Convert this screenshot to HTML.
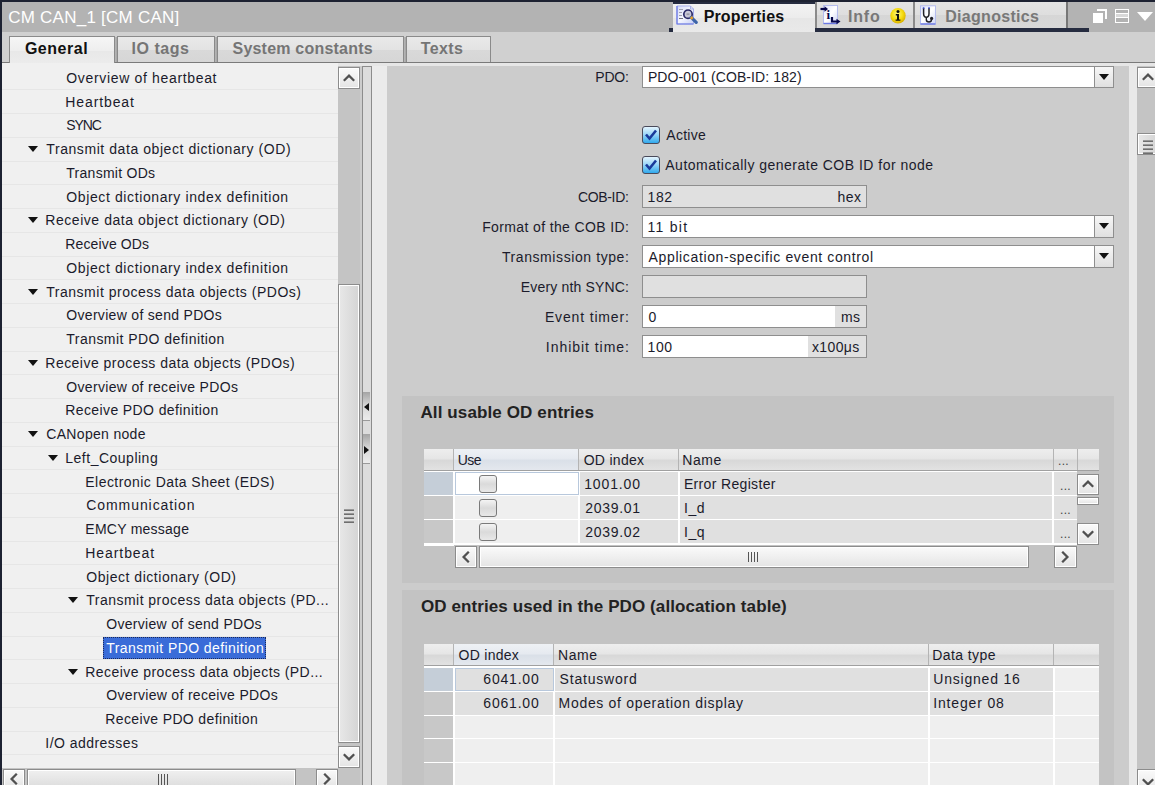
<!DOCTYPE html>
<html><head><meta charset="utf-8">
<style>
*{margin:0;padding:0;box-sizing:border-box}
html,body{width:1155px;height:785px;overflow:hidden;background:#cccccc;font-family:"Liberation Sans",sans-serif;}
.a{position:absolute}
.t{position:absolute;white-space:pre}
#titlebar{position:absolute;left:0;top:0;width:1155px;height:32px;background:#b3b3b3;border-top:2px solid #1d2232;border-left:2px solid #1d2232}
#leftborder{position:absolute;left:0;top:0;width:2px;height:785px;background:#1d2232}
#tabstrip{position:absolute;left:2px;top:32px;width:1153px;height:31px;background:#d0d0d0}
.tab{position:absolute;top:36px;height:27px;border:1px solid #8a8a8a;border-bottom:none;background:linear-gradient(#e9e9e9,#e3e3e3 50%,#d9d9d9 51%,#d6d6d6)}
.rtab{position:absolute;top:2px;height:26px;border-left:2px solid #8a8a8a;background:linear-gradient(#e4e4e4,#dedede 50%,#d6d6d6 51%,#d8d8d8)}
#tree{position:absolute;left:2px;top:63px;width:336px;height:705px;background:#f0f0f0}
.sep{position:absolute;left:2px;width:336px;height:1px;background:#e6e6e6}
.sbtn{position:absolute;border:1px solid #8c8c8c;background:linear-gradient(#fafafa,#e4e4e4);box-shadow:inset 0 0 0 1px #fff}
.grip{position:absolute;width:10px;height:14px;background:linear-gradient(#bbb 0,#777 1px,#666 2px,transparent 2px,transparent 4px,#bbb 4px,#777 5px,#666 6px,transparent 6px,transparent 8px,#bbb 8px,#777 9px,#666 10px,transparent 10px,transparent 12px,#bbb 12px,#777 13px,#666 14px)}
.inp{position:absolute;border:1px solid #8e8e8e}
.ddb{position:absolute;border:1px solid #8e8e8e;background:linear-gradient(#f6f6f6,#e0e0e0)}
.cbx{position:absolute;width:18px;height:18px;border:1px solid #7a7a7a;border-radius:3px;background:linear-gradient(#f4f4f4,#dadada 50%,#e8e8e8)}
.th{position:absolute;background:linear-gradient(#eeeeee,#e6e6e6 45%,#d8d8d8 55%,#e2e2e2);border-bottom:1px solid #a0a0a0}
</style></head><body>

<div id="titlebar"></div>
<div class="a" style="left:669px;top:28px;width:420px;height:4px;background:#262c40"></div>
<div class="a" style="left:673px;top:2px;width:142px;height:30px;background:linear-gradient(#f2f2f2,#ececec 50%,#e6e6e6 51%,#e9e9e9);border-top:2px solid #262c40"></div>
<div class="rtab" style="left:815px;width:98px"></div>
<div class="rtab" style="left:913px;width:155px;border-right:2px solid #777"></div>
<svg class="a" style="left:676px;top:5px" width="22" height="22" viewBox="0 0 22 22">
 <defs><linearGradient id="pdoc" x1="0" y1="0" x2="1" y2="1"><stop offset="0" stop-color="#d6dcf8"/><stop offset="0.5" stop-color="#f4f6ff"/><stop offset="1" stop-color="#c8d0f4"/></linearGradient></defs>
 <path d="M1,1 L14.5,1 L17.5,4 L17.5,19 L1,19 Z" fill="url(#pdoc)" stroke="#a8b0ec" stroke-width="1"/>
 <path d="M1,1 L1,19 L17.5,19" fill="none" stroke="#6a78e4" stroke-width="1.2"/>
 <path d="M14.5,1 L14.5,4 L17.5,4" fill="none" stroke="#9aa4e0" stroke-width="0.8"/>
 <line x1="3" y1="4.5" x2="7" y2="4.5" stroke="#a0a0b0"/><line x1="3" y1="7.5" x2="6" y2="7.5" stroke="#a0a0b0"/><line x1="3" y1="10.5" x2="6" y2="10.5" stroke="#a0a0b0"/><line x1="3" y1="13.5" x2="7" y2="13.5" stroke="#707080"/>
 <circle cx="12" cy="9.2" r="4.2" fill="#c8c8d8" stroke="#2a2a68" stroke-width="1.7"/>
 <rect x="10.5" y="8.3" width="3" height="1.8" fill="#9a9aaa"/>
 <line x1="15.2" y1="12.4" x2="20.2" y2="17.4" stroke="#3c64a8" stroke-width="3.2" stroke-linecap="round"/>
 <line x1="14.8" y1="12" x2="16.6" y2="13.8" stroke="#e8a028" stroke-width="2.6"/>
</svg>
<svg class="a" style="left:820px;top:4px" width="22" height="22" viewBox="0 0 22 22">
 <defs><linearGradient id="idoc" x1="0" y1="0" x2="1" y2="1"><stop offset="0" stop-color="#dfe3fb"/><stop offset="0.5" stop-color="#ffffff"/><stop offset="1" stop-color="#cdd4f6"/></linearGradient></defs>
 <rect x="3.5" y="1.5" width="14" height="18" fill="url(#idoc)" stroke="#b4bcee" stroke-width="1"/>
 <line x1="3.5" y1="19.5" x2="17.5" y2="19.5" stroke="#6a78e4" stroke-width="1.4"/>
 <path d="M0.5,5 L6,5" stroke="#06064a" stroke-width="2.2"/><path d="M4.5,2.2 L8,5 L4.5,7.8 Z" fill="#06064a"/>
 <text x="6.4" y="15" font-family="Liberation Serif" font-weight="bold" font-size="13" fill="#06064a">i</text>
 <path d="M12,13 L12,17.5 L17.5,17.5" fill="none" stroke="#06064a" stroke-width="2.2"/><path d="M16.5,14.7 L20.5,17.5 L16.5,20.3 Z" fill="#06064a"/>
</svg>
<svg class="a" style="left:889px;top:7px" width="18" height="18" viewBox="0 0 18 18">
 <defs><radialGradient id="yel" cx="0.45" cy="0.4" r="0.6"><stop offset="0" stop-color="#fff680"/><stop offset="0.6" stop-color="#f6dc10"/><stop offset="1" stop-color="#d8b000"/></radialGradient></defs>
 <circle cx="9" cy="8.8" r="7.7" fill="url(#yel)"/>
 <circle cx="9" cy="4.6" r="1.5" fill="#111"/>
 <path d="M6.8,7 L10,7 L10,12.4 L11.4,12.4 L11.4,13.8 L6.6,13.8 L6.6,12.4 L8,12.4 L8,8.4 L6.8,8.4 Z" fill="#111"/>
</svg>
<svg class="a" style="left:919px;top:5px" width="18" height="21" viewBox="0 0 18 21">
 <defs><linearGradient id="ddoc" x1="0" y1="0" x2="1" y2="1"><stop offset="0" stop-color="#dfe3fb"/><stop offset="0.5" stop-color="#ffffff"/><stop offset="1" stop-color="#cdd4f6"/></linearGradient></defs>
 <rect x="1.5" y="0.8" width="15" height="18.2" fill="url(#ddoc)" stroke="#b4bcee" stroke-width="1"/>
 <line x1="1.5" y1="19" x2="16.5" y2="19" stroke="#6a78e4" stroke-width="1.4"/>
 <path d="M4.6,3 L4.6,8.5 Q4.6,12.2 7.3,12.2 Q10,12.2 10,8.5 L10,3" fill="none" stroke="#202028" stroke-width="1.5"/>
 <path d="M7.3,12.2 L7.3,14.5 Q7.3,17 10,17 Q12.5,17 12.5,14.5" fill="none" stroke="#202028" stroke-width="1.4"/>
 <circle cx="12.6" cy="13.4" r="1.6" fill="#202028"/>
 <line x1="3.8" y1="3" x2="5.4" y2="3" stroke="#3a4ad0" stroke-width="1.5"/><line x1="9.2" y1="3" x2="10.8" y2="3" stroke="#3a4ad0" stroke-width="1.5"/>
</svg>
<div class="a" style="left:1097px;top:9px;width:10px;height:10px;border-top:2px solid #fff;border-right:2px solid #fff"></div>
<div class="a" style="left:1093px;top:13px;width:10px;height:10px;background:#fff"></div>
<div class="a" style="left:1115px;top:9px;width:14px;height:14px;border:1.5px solid #fff;background:linear-gradient(#b3b3b3 0,#b3b3b3 3px,#fff 3px,#fff 4px,#d8d8d8 4px,#d8d8d8 7px,#fff 7px,#fff 8px,#b3b3b3 8px)"></div>
<svg class="a" style="left:1137px;top:12px" width="16" height="10" viewBox="0 0 16 10"><path d="M0,0 L16,0 L8,9 Z" fill="#fff"/></svg>

<div id="leftborder"></div>
<div id="tabstrip"></div>
<div class="a" style="left:2px;top:62px;width:1153px;height:1px;background:#7a7a7a"></div>
<div class="a" style="left:2px;top:63px;width:1153px;height:3px;background:#e6e6e6"></div>
<div class="tab" style="left:9px;width:106px;height:28px;background:linear-gradient(#f6f6f6,#eeeeee 50%,#e8e8e8 51%,#ececec)"></div>
<div class="tab" style="left:117px;width:98px;height:26px"></div>
<div class="tab" style="left:217px;width:187px;height:26px"></div>
<div class="tab" style="left:406px;width:85px;height:26px"></div>
<div class="a" style="left:115px;top:37px;width:2px;height:25px;background:linear-gradient(90deg,#b8b8b8,#a4a4a4)"></div>
<div class="a" style="left:215px;top:37px;width:2px;height:25px;background:linear-gradient(90deg,#b8b8b8,#a4a4a4)"></div>
<div class="a" style="left:404px;top:37px;width:2px;height:25px;background:linear-gradient(90deg,#b8b8b8,#a4a4a4)"></div>

<div id="tree"></div>
<div class="sep" style="top:89.25px"></div>
<div class="sep" style="top:113.00px"></div>
<div class="sep" style="top:136.75px"></div>
<div class="sep" style="top:160.50px"></div>
<svg class="a" style="left:28px;top:146px" width="10" height="6"><path d="M0,0 L10,0 L5,6Z" fill="#111"/></svg>
<div class="sep" style="top:184.25px"></div>
<div class="sep" style="top:208.00px"></div>
<div class="sep" style="top:231.75px"></div>
<svg class="a" style="left:28px;top:217px" width="10" height="6"><path d="M0,0 L10,0 L5,6Z" fill="#111"/></svg>
<div class="sep" style="top:255.50px"></div>
<div class="sep" style="top:279.25px"></div>
<div class="sep" style="top:303.00px"></div>
<svg class="a" style="left:28px;top:289px" width="10" height="6"><path d="M0,0 L10,0 L5,6Z" fill="#111"/></svg>
<div class="sep" style="top:326.75px"></div>
<div class="sep" style="top:350.50px"></div>
<div class="sep" style="top:374.25px"></div>
<svg class="a" style="left:28px;top:360px" width="10" height="6"><path d="M0,0 L10,0 L5,6Z" fill="#111"/></svg>
<div class="sep" style="top:398.00px"></div>
<div class="sep" style="top:421.75px"></div>
<div class="sep" style="top:445.50px"></div>
<svg class="a" style="left:28px;top:431px" width="10" height="6"><path d="M0,0 L10,0 L5,6Z" fill="#111"/></svg>
<div class="sep" style="top:469.25px"></div>
<svg class="a" style="left:48px;top:455px" width="10" height="6"><path d="M0,0 L10,0 L5,6Z" fill="#111"/></svg>
<div class="sep" style="top:493.00px"></div>
<div class="sep" style="top:516.75px"></div>
<div class="sep" style="top:540.50px"></div>
<div class="sep" style="top:564.25px"></div>
<div class="sep" style="top:588.00px"></div>
<div class="sep" style="top:611.75px"></div>
<svg class="a" style="left:68px;top:597px" width="10" height="6"><path d="M0,0 L10,0 L5,6Z" fill="#111"/></svg>
<div class="sep" style="top:635.50px"></div>
<div class="sep" style="top:659.25px"></div>
<div class="a" style="left:103px;top:636.5px;width:162.5px;height:22px;background:#3a6cd8;border:1px dotted #1c2a5a"></div>
<div class="sep" style="top:683.00px"></div>
<svg class="a" style="left:68px;top:669px" width="10" height="6"><path d="M0,0 L10,0 L5,6Z" fill="#111"/></svg>
<div class="sep" style="top:706.75px"></div>
<div class="sep" style="top:730.50px"></div>
<div class="sep" style="top:754.25px"></div>
<div class="sep" style="top:778.00px"></div>
<div class="a" style="left:338px;top:66px;width:22px;height:702px;background:#c4c4c4"></div>
<div class="sbtn" style="left:338px;top:67px;width:22px;height:22px"></div><svg class="a" style="left:343px;top:72px" width="12" height="12" viewBox="0 0 12 12"><path d="M0.8,8.8 L6,3.6 L11.2,8.8" fill="none" stroke="#505050" stroke-width="2.3"/></svg>
<div class="sbtn" style="left:338px;top:284px;width:22px;height:459px;background:linear-gradient(90deg,#e8e8e8,#d4d4d4)"></div>
<div class="grip" style="left:344px;top:509px"></div>
<div class="sbtn" style="left:338px;top:746px;width:22px;height:22px"></div><svg class="a" style="left:343px;top:751px" width="12" height="12" viewBox="0 0 12 12"><path d="M0.8,3.2 L6,8.4 L11.2,3.2" fill="none" stroke="#505050" stroke-width="2.3"/></svg>
<div class="a" style="left:2px;top:768px;width:358px;height:17px;background:#c4c4c4"></div>
<div class="sbtn" style="left:3px;top:769px;width:22px;height:20px"></div><svg class="a" style="left:8px;top:773px" width="12" height="12" viewBox="0 0 12 12"><path d="M8.8,0.8 L3.6,6 L8.8,11.2" fill="none" stroke="#505050" stroke-width="2.3"/></svg>
<div class="sbtn" style="left:27px;top:769px;width:269px;height:20px;background:linear-gradient(#f0f0f0,#dcdcdc)"></div>
<div class="a" style="left:158px;top:774px;width:10px;height:11px;background:linear-gradient(90deg,#555 0,#555 1.2px,transparent 1.2px,transparent 3px,#555 3px,#555 4.2px,transparent 4.2px,transparent 6px,#555 6px,#555 7.2px,transparent 7.2px,transparent 9px,#555 9px)"></div>
<div class="sbtn" style="left:316px;top:769px;width:22px;height:20px"></div><svg class="a" style="left:321px;top:773px" width="12" height="12" viewBox="0 0 12 12"><path d="M3.2,0.8 L8.4,6 L3.2,11.2" fill="none" stroke="#505050" stroke-width="2.3"/></svg>
<div class="a" style="left:362px;top:66px;width:10px;height:719px;background:#dcdcdc;border:1px solid #8c8c8c;border-bottom:none"></div>
<div class="a" style="left:363px;top:392px;width:7px;height:29px;background:linear-gradient(#a4a4a4,#d8d8d8 50%,#ececec);border-bottom:1px solid #9a9a9a"></div>
<svg class="a" style="left:364px;top:403px" width="5" height="8"><path d="M5,0 L5,8 L0,4Z" fill="#111"/></svg>
<div class="a" style="left:363px;top:434px;width:7px;height:30px;background:linear-gradient(#a4a4a4,#d8d8d8 50%,#ececec);border-bottom:1px solid #9a9a9a"></div>
<svg class="a" style="left:364px;top:446px" width="5" height="8"><path d="M0,0 L0,8 L5,4Z" fill="#111"/></svg>
<div class="a" style="left:372px;top:66px;width:15px;height:719px;background:#ebebeb"></div>
<div class="a" style="left:387px;top:66px;width:742px;height:719px;background:#cccccc"></div>
<div class="a" style="left:1129px;top:66px;width:8px;height:719px;background:#e9e9e9"></div>
<div class="a" style="left:1137px;top:66px;width:18px;height:719px;background:#c4c4c4"></div>
<div class="sbtn" style="left:1137px;top:67px;width:22px;height:21px"></div><svg class="a" style="left:1142px;top:71px" width="12" height="12" viewBox="0 0 12 12"><path d="M0.8,8.8 L6,3.6 L11.2,8.8" fill="none" stroke="#505050" stroke-width="2.3"/></svg>
<div class="sbtn" style="left:1137px;top:133px;width:22px;height:22px;background:linear-gradient(90deg,#e8e8e8,#d4d4d4)"></div>
<div class="grip" style="left:1143px;top:140px"></div>
<div class="sbtn" style="left:1137px;top:769px;width:22px;height:26px"></div><svg class="a" style="left:1142px;top:776px" width="12" height="12" viewBox="0 0 12 12"><path d="M0.8,3.2 L6,8.4 L11.2,3.2" fill="none" stroke="#505050" stroke-width="2.3"/></svg>
<div class="inp" style="left:642px;top:66px;width:472px;height:22px;background:#fff"></div>
<div class="ddb" style="left:1094px;top:66px;width:20px;height:22px"></div>
<svg class="a" style="left:1099px;top:74px" width="10" height="6"><path d="M0,0 L10,0 L5,6Z" fill="#111"/></svg>
<svg class="a" style="left:642px;top:126px" width="18" height="18" viewBox="0 0 18 18">
<defs><linearGradient id="cbg126" x1="0" y1="0" x2="0" y2="1"><stop offset="0" stop-color="#e8f6ff"/><stop offset="0.45" stop-color="#9fd8f8"/><stop offset="1" stop-color="#2aa6ec"/></linearGradient></defs>
<rect x="0.5" y="0.5" width="17" height="17" rx="2.5" fill="url(#cbg126)" stroke="#4a4a5a"/>
<path d="M4,8.5 L7.5,12.5 L14,4.5" fill="none" stroke="#1a3a9a" stroke-width="2.6"/></svg>
<svg class="a" style="left:642px;top:156px" width="18" height="18" viewBox="0 0 18 18">
<defs><linearGradient id="cbg156" x1="0" y1="0" x2="0" y2="1"><stop offset="0" stop-color="#e8f6ff"/><stop offset="0.45" stop-color="#9fd8f8"/><stop offset="1" stop-color="#2aa6ec"/></linearGradient></defs>
<rect x="0.5" y="0.5" width="17" height="17" rx="2.5" fill="url(#cbg156)" stroke="#4a4a5a"/>
<path d="M4,8.5 L7.5,12.5 L14,4.5" fill="none" stroke="#1a3a9a" stroke-width="2.6"/></svg>
<div class="inp" style="left:642px;top:185px;width:225px;height:23px;background:#e0e0e0"></div>
<div class="a" style="left:830px;top:186px;width:36px;height:21px;background:#e0e0e0"></div>
<div class="inp" style="left:642px;top:215px;width:472px;height:23px;background:#fff"></div>
<div class="ddb" style="left:1094px;top:215px;width:20px;height:23px"></div>
<svg class="a" style="left:1099px;top:223px" width="10" height="6"><path d="M0,0 L10,0 L5,6Z" fill="#111"/></svg>
<div class="inp" style="left:642px;top:245px;width:472px;height:23px;background:#fff"></div>
<div class="ddb" style="left:1094px;top:245px;width:20px;height:23px"></div>
<svg class="a" style="left:1099px;top:253px" width="10" height="6"><path d="M0,0 L10,0 L5,6Z" fill="#111"/></svg>
<div class="inp" style="left:642px;top:275px;width:225px;height:23px;background:#e0e0e0"></div>
<div class="inp" style="left:642px;top:305px;width:225px;height:23px;background:#fff"></div>
<div class="a" style="left:835px;top:306px;width:31px;height:21px;background:#e0e0e0"></div>
<div class="inp" style="left:642px;top:335px;width:225px;height:23px;background:#fff"></div>
<div class="a" style="left:808px;top:336px;width:58px;height:21px;background:#e0e0e0"></div>
<div class="a" style="left:402px;top:396px;width:712px;height:187px;background:#c3c3c3"></div>
<div class="a" style="left:402px;top:590px;width:712px;height:195px;background:#c3c3c3"></div>
<div class="th" style="left:424px;top:449px;width:675px;height:22px"></div>
<div class="a" style="left:454px;top:449px;width:125px;height:22px;background:linear-gradient(#eef1f5,#e6eaf0 45%,#dae0e8 55%,#e4e8ee);border-bottom:1px solid #a0a0a0"></div>
<div class="a" style="left:453px;top:449px;width:1px;height:21px;background:#b4b4b4"></div>
<div class="a" style="left:578px;top:449px;width:1px;height:21px;background:#b4b4b4"></div>
<div class="a" style="left:678px;top:449px;width:1px;height:21px;background:#b4b4b4"></div>
<div class="a" style="left:1053px;top:449px;width:1px;height:21px;background:#b4b4b4"></div>
<div class="a" style="left:1077px;top:449px;width:1px;height:21px;background:#b4b4b4"></div>
<div class="a" style="left:424px;top:471.00px;width:675px;height:97.00px;background:#ffffff"></div>
<div class="a" style="left:424px;top:472.00px;width:29px;height:23.00px;background:#c5ced8"></div>
<div class="a" style="left:455px;top:472.00px;width:123px;height:23.00px;background:#ffffff"></div>
<div class="a" style="left:580px;top:472.00px;width:98px;height:23.00px;background:#e0e0e0"></div>
<div class="a" style="left:680px;top:472.00px;width:372px;height:23.00px;background:#e0e0e0"></div>
<div class="a" style="left:1054px;top:472.00px;width:23px;height:23.00px;background:#e0e0e0"></div>
<div class="cbx" style="left:479px;top:475px"></div>
<div class="a" style="left:424px;top:496.00px;width:29px;height:23.00px;background:#c8c8c8"></div>
<div class="a" style="left:455px;top:496.00px;width:123px;height:23.00px;background:#efefef"></div>
<div class="a" style="left:580px;top:496.00px;width:98px;height:23.00px;background:#e0e0e0"></div>
<div class="a" style="left:680px;top:496.00px;width:372px;height:23.00px;background:#e0e0e0"></div>
<div class="a" style="left:1054px;top:496.00px;width:23px;height:23.00px;background:#e0e0e0"></div>
<div class="cbx" style="left:479px;top:499px"></div>
<div class="a" style="left:424px;top:520.00px;width:29px;height:23.00px;background:#c8c8c8"></div>
<div class="a" style="left:455px;top:520.00px;width:123px;height:23.00px;background:#efefef"></div>
<div class="a" style="left:580px;top:520.00px;width:98px;height:23.00px;background:#e0e0e0"></div>
<div class="a" style="left:680px;top:520.00px;width:372px;height:23.00px;background:#e0e0e0"></div>
<div class="a" style="left:1054px;top:520.00px;width:23px;height:23.00px;background:#e0e0e0"></div>
<div class="cbx" style="left:479px;top:523px"></div>
<div class="a" style="left:455px;top:472px;width:124px;height:23px;border:1px solid #b8c8dc"></div>
<div class="a" style="left:1077px;top:471.00px;width:22px;height:97.00px;background:#c3c3c3"></div>
<div class="sbtn" style="left:1077px;top:474px;width:22px;height:21px"></div><svg class="a" style="left:1082px;top:478px" width="12" height="12" viewBox="0 0 12 12"><path d="M0.8,8.8 L6,3.6 L11.2,8.8" fill="none" stroke="#505050" stroke-width="2.3"/></svg>
<div class="sbtn" style="left:1077px;top:497px;width:22px;height:8px"></div>
<div class="sbtn" style="left:1077px;top:523px;width:22px;height:22px"></div><svg class="a" style="left:1082px;top:528px" width="12" height="12" viewBox="0 0 12 12"><path d="M0.8,3.2 L6,8.4 L11.2,3.2" fill="none" stroke="#505050" stroke-width="2.3"/></svg>
<div class="a" style="left:424px;top:544.00px;width:30px;height:24.00px;background:#c3c3c3"></div>
<div class="a" style="left:424px;top:544.00px;width:30px;height:1.50px;background:#ffffff"></div>
<div class="a" style="left:454px;top:545.00px;width:623px;height:23.00px;background:#c3c3c3"></div>
<div class="sbtn" style="left:455px;top:546px;width:22px;height:22px"></div><svg class="a" style="left:460px;top:551px" width="12" height="12" viewBox="0 0 12 12"><path d="M8.8,0.8 L3.6,6 L8.8,11.2" fill="none" stroke="#505050" stroke-width="2.3"/></svg>
<div class="sbtn" style="left:479px;top:546px;width:550px;height:22px"></div>
<div class="a" style="left:748px;top:552px;width:10px;height:10px;background:linear-gradient(90deg,#555 0,#555 1.2px,transparent 1.2px,transparent 3px,#555 3px,#555 4.2px,transparent 4.2px,transparent 6px,#555 6px,#555 7.2px,transparent 7.2px,transparent 9px,#555 9px)"></div>
<div class="sbtn" style="left:1054px;top:546px;width:23px;height:22px"></div><svg class="a" style="left:1059px;top:551px" width="12" height="12" viewBox="0 0 12 12"><path d="M3.2,0.8 L8.4,6 L3.2,11.2" fill="none" stroke="#505050" stroke-width="2.3"/></svg>
<div class="th" style="left:424px;top:644px;width:675px;height:22px"></div>
<div class="a" style="left:454px;top:644px;width:100px;height:22px;background:linear-gradient(#eef1f5,#e6eaf0 45%,#dae0e8 55%,#e4e8ee);border-bottom:1px solid #a0a0a0"></div>
<div class="a" style="left:453px;top:644px;width:1px;height:21px;background:#b4b4b4"></div>
<div class="a" style="left:553px;top:644px;width:1px;height:21px;background:#b4b4b4"></div>
<div class="a" style="left:928px;top:644px;width:1px;height:21px;background:#b4b4b4"></div>
<div class="a" style="left:1053px;top:644px;width:1px;height:21px;background:#b4b4b4"></div>
<div class="a" style="left:424px;top:666.00px;width:675px;height:119.00px;background:#ffffff"></div>
<div class="a" style="left:424px;top:668.00px;width:29px;height:23.00px;background:#c5ced8"></div>
<div class="a" style="left:455px;top:668.00px;width:98px;height:23.00px;background:#e0e0e0"></div>
<div class="a" style="left:555px;top:668.00px;width:373px;height:23.00px;background:#e0e0e0"></div>
<div class="a" style="left:930px;top:668.00px;width:123px;height:23.00px;background:#e0e0e0"></div>
<div class="a" style="left:1055px;top:668.00px;width:44px;height:23.00px;background:#efefef"></div>
<div class="a" style="left:424px;top:692.00px;width:29px;height:23.00px;background:#c8c8c8"></div>
<div class="a" style="left:455px;top:692.00px;width:98px;height:23.00px;background:#e0e0e0"></div>
<div class="a" style="left:555px;top:692.00px;width:373px;height:23.00px;background:#e0e0e0"></div>
<div class="a" style="left:930px;top:692.00px;width:123px;height:23.00px;background:#e0e0e0"></div>
<div class="a" style="left:1055px;top:692.00px;width:44px;height:23.00px;background:#efefef"></div>
<div class="a" style="left:424px;top:716.00px;width:29px;height:22.00px;background:#c8c8c8"></div>
<div class="a" style="left:455px;top:716.00px;width:98px;height:22.00px;background:#efefef"></div>
<div class="a" style="left:555px;top:716.00px;width:373px;height:22.00px;background:#efefef"></div>
<div class="a" style="left:930px;top:716.00px;width:123px;height:22.00px;background:#efefef"></div>
<div class="a" style="left:1055px;top:716.00px;width:44px;height:22.00px;background:#efefef"></div>
<div class="a" style="left:424px;top:739.00px;width:29px;height:23.00px;background:#c8c8c8"></div>
<div class="a" style="left:455px;top:739.00px;width:98px;height:23.00px;background:#efefef"></div>
<div class="a" style="left:555px;top:739.00px;width:373px;height:23.00px;background:#efefef"></div>
<div class="a" style="left:930px;top:739.00px;width:123px;height:23.00px;background:#efefef"></div>
<div class="a" style="left:1055px;top:739.00px;width:44px;height:23.00px;background:#efefef"></div>
<div class="a" style="left:424px;top:763.00px;width:29px;height:23.00px;background:#c8c8c8"></div>
<div class="a" style="left:455px;top:763.00px;width:98px;height:23.00px;background:#efefef"></div>
<div class="a" style="left:555px;top:763.00px;width:373px;height:23.00px;background:#efefef"></div>
<div class="a" style="left:930px;top:763.00px;width:123px;height:23.00px;background:#efefef"></div>
<div class="a" style="left:1055px;top:763.00px;width:44px;height:23.00px;background:#efefef"></div>
<div class="a" style="left:455px;top:668px;width:99px;height:23px;border:1px solid #b8c8dc"></div>

<div class="t" style="left:66.30px;top:71.00px;font-size:14px;line-height:14px;font-weight:normal;color:#1b1b2b;letter-spacing:0.662px;">Overview of heartbeat</div>
<div class="t" style="left:65.30px;top:95.00px;font-size:14px;line-height:14px;font-weight:normal;color:#1b1b2b;letter-spacing:0.888px;">Heartbeat</div>
<div class="t" style="left:66.30px;top:118.00px;font-size:14px;line-height:14px;font-weight:normal;color:#1b1b2b;letter-spacing:-1.095px;">SYNC</div>
<div class="t" style="left:46.30px;top:142.00px;font-size:14px;line-height:14px;font-weight:normal;color:#1b1b2b;letter-spacing:0.569px;">Transmit data object dictionary (OD)</div>
<div class="t" style="left:66.30px;top:166.00px;font-size:14px;line-height:14px;font-weight:normal;color:#1b1b2b;letter-spacing:0.271px;">Transmit ODs</div>
<div class="t" style="left:66.30px;top:190.00px;font-size:14px;line-height:14px;font-weight:normal;color:#1b1b2b;letter-spacing:0.613px;">Object dictionary index definition</div>
<div class="t" style="left:45.30px;top:213.00px;font-size:14px;line-height:14px;font-weight:normal;color:#1b1b2b;letter-spacing:0.546px;">Receive data object dictionary (OD)</div>
<div class="t" style="left:65.30px;top:237.00px;font-size:14px;line-height:14px;font-weight:normal;color:#1b1b2b;letter-spacing:0.133px;">Receive ODs</div>
<div class="t" style="left:66.30px;top:261.00px;font-size:14px;line-height:14px;font-weight:normal;color:#1b1b2b;letter-spacing:0.613px;">Object dictionary index definition</div>
<div class="t" style="left:46.30px;top:285.00px;font-size:14px;line-height:14px;font-weight:normal;color:#1b1b2b;letter-spacing:0.511px;">Transmit process data objects (PDOs)</div>
<div class="t" style="left:66.30px;top:308.00px;font-size:14px;line-height:14px;font-weight:normal;color:#1b1b2b;letter-spacing:0.306px;">Overview of send PDOs</div>
<div class="t" style="left:66.30px;top:332.00px;font-size:14px;line-height:14px;font-weight:normal;color:#1b1b2b;letter-spacing:0.455px;">Transmit PDO definition</div>
<div class="t" style="left:45.30px;top:356.00px;font-size:14px;line-height:14px;font-weight:normal;color:#1b1b2b;letter-spacing:0.469px;">Receive process data objects (PDOs)</div>
<div class="t" style="left:66.30px;top:380.00px;font-size:14px;line-height:14px;font-weight:normal;color:#1b1b2b;letter-spacing:0.324px;">Overview of receive PDOs</div>
<div class="t" style="left:65.30px;top:403.00px;font-size:14px;line-height:14px;font-weight:normal;color:#1b1b2b;letter-spacing:0.388px;">Receive PDO definition</div>
<div class="t" style="left:46.30px;top:427.00px;font-size:14px;line-height:14px;font-weight:normal;color:#1b1b2b;letter-spacing:0.314px;">CANopen node</div>
<div class="t" style="left:65.30px;top:451.00px;font-size:14px;line-height:14px;font-weight:normal;color:#1b1b2b;letter-spacing:0.499px;">Left_Coupling</div>
<div class="t" style="left:85.30px;top:475.00px;font-size:14px;line-height:14px;font-weight:normal;color:#1b1b2b;letter-spacing:0.452px;">Electronic Data Sheet (EDS)</div>
<div class="t" style="left:86.30px;top:498.00px;font-size:14px;line-height:14px;font-weight:normal;color:#1b1b2b;letter-spacing:0.919px;">Communication</div>
<div class="t" style="left:85.30px;top:522.00px;font-size:14px;line-height:14px;font-weight:normal;color:#1b1b2b;letter-spacing:0.249px;">EMCY message</div>
<div class="t" style="left:85.30px;top:546.00px;font-size:14px;line-height:14px;font-weight:normal;color:#1b1b2b;letter-spacing:0.926px;">Heartbeat</div>
<div class="t" style="left:86.30px;top:570.00px;font-size:14px;line-height:14px;font-weight:normal;color:#1b1b2b;letter-spacing:0.532px;">Object dictionary (OD)</div>
<div class="t" style="left:86.30px;top:593.00px;font-size:14px;line-height:14px;font-weight:normal;color:#1b1b2b;letter-spacing:0.471px;">Transmit process data objects (PD...</div>
<div class="t" style="left:106.30px;top:617.00px;font-size:14px;line-height:14px;font-weight:normal;color:#1b1b2b;letter-spacing:0.296px;">Overview of send PDOs</div>
<div class="t" style="left:106.30px;top:641.00px;font-size:14px;line-height:14px;font-weight:normal;color:#ffffff;letter-spacing:0.423px;">Transmit PDO definition</div>
<div class="t" style="left:85.30px;top:665.00px;font-size:14px;line-height:14px;font-weight:normal;color:#1b1b2b;letter-spacing:0.437px;">Receive process data objects (PD...</div>
<div class="t" style="left:106.30px;top:688.00px;font-size:14px;line-height:14px;font-weight:normal;color:#1b1b2b;letter-spacing:0.315px;">Overview of receive PDOs</div>
<div class="t" style="left:105.30px;top:712.00px;font-size:14px;line-height:14px;font-weight:normal;color:#1b1b2b;letter-spacing:0.364px;">Receive PDO definition</div>
<div class="t" style="left:45.30px;top:736.00px;font-size:14px;line-height:14px;font-weight:normal;color:#1b1b2b;letter-spacing:0.454px;">I/O addresses</div>
<div class="t" style="left:8.20px;top:8.70px;font-size:17px;line-height:17px;font-weight:normal;color:#ffffff;letter-spacing:0.246px;">CM CAN_1 [CM CAN]</div>
<div class="t" style="left:24.90px;top:41.10px;font-size:16px;line-height:16px;font-weight:bold;color:#111111;letter-spacing:0.527px;">General</div>
<div class="t" style="left:131.50px;top:41.10px;font-size:16px;line-height:16px;font-weight:bold;color:#757575;letter-spacing:0.527px;">IO tags</div>
<div class="t" style="left:232.50px;top:41.10px;font-size:16px;line-height:16px;font-weight:bold;color:#757575;letter-spacing:0.211px;">System constants</div>
<div class="t" style="left:420.80px;top:41.10px;font-size:16px;line-height:16px;font-weight:bold;color:#757575;letter-spacing:0.347px;">Texts</div>
<div class="t" style="left:703.70px;top:8.80px;font-size:16px;line-height:16px;font-weight:bold;color:#111111;letter-spacing:0.140px;">Properties</div>
<div class="t" style="left:848.00px;top:8.80px;font-size:16px;line-height:16px;font-weight:bold;color:#787878;letter-spacing:0.818px;">Info</div>
<div class="t" style="left:945.20px;top:8.80px;font-size:16px;line-height:16px;font-weight:bold;color:#787878;letter-spacing:0.301px;">Diagnostics</div>
<div class="t" style="left:595.20px;top:69.70px;font-size:14px;line-height:14px;font-weight:normal;color:#1b1b2b;letter-spacing:-0.146px;">PDO:</div>
<div class="t" style="left:647.90px;top:69.70px;font-size:14px;line-height:14px;font-weight:normal;color:#1b1b2b;letter-spacing:0.098px;">PDO-001 (COB-ID: 182)</div>
<div class="t" style="left:666.30px;top:128.30px;font-size:14px;line-height:14px;font-weight:normal;color:#1b1b2b;letter-spacing:0.272px;">Active</div>
<div class="t" style="left:665.30px;top:158.10px;font-size:14px;line-height:14px;font-weight:normal;color:#1b1b2b;letter-spacing:0.486px;">Automatically generate COB ID for node</div>
<div class="t" style="left:577.90px;top:189.50px;font-size:14px;line-height:14px;font-weight:normal;color:#1b1b2b;letter-spacing:-0.317px;">COB-ID:</div>
<div class="t" style="left:482.20px;top:219.50px;font-size:14px;line-height:14px;font-weight:normal;color:#1b1b2b;letter-spacing:0.371px;">Format of the COB ID:</div>
<div class="t" style="left:501.90px;top:249.50px;font-size:14px;line-height:14px;font-weight:normal;color:#1b1b2b;letter-spacing:0.590px;">Transmission type:</div>
<div class="t" style="left:520.80px;top:279.50px;font-size:14px;line-height:14px;font-weight:normal;color:#1b1b2b;letter-spacing:0.163px;">Every nth SYNC:</div>
<div class="t" style="left:544.90px;top:309.50px;font-size:14px;line-height:14px;font-weight:normal;color:#1b1b2b;letter-spacing:0.845px;">Event timer:</div>
<div class="t" style="left:545.80px;top:339.50px;font-size:14px;line-height:14px;font-weight:normal;color:#1b1b2b;letter-spacing:0.959px;">Inhibit time:</div>
<div class="t" style="left:647.60px;top:189.50px;font-size:14px;line-height:14px;font-weight:normal;color:#1b1b2b;letter-spacing:0.564px;">182</div>
<div class="t" style="left:837.50px;top:189.50px;font-size:14px;line-height:14px;font-weight:normal;color:#1b1b2b;letter-spacing:0.500px;">hex</div>
<div class="t" style="left:647.60px;top:219.50px;font-size:14px;line-height:14px;font-weight:normal;color:#1b1b2b;letter-spacing:1.256px;">11 bit</div>
<div class="t" style="left:648.60px;top:249.50px;font-size:14px;line-height:14px;font-weight:normal;color:#1b1b2b;letter-spacing:0.625px;">Application-specific event control</div>
<div class="t" style="left:648.60px;top:309.50px;font-size:14px;line-height:14px;font-weight:normal;color:#1b1b2b;letter-spacing:0.600px;">0</div>
<div class="t" style="left:841.00px;top:309.50px;font-size:14px;line-height:14px;font-weight:normal;color:#1b1b2b;letter-spacing:0.300px;">ms</div>
<div class="t" style="left:647.60px;top:339.50px;font-size:14px;line-height:14px;font-weight:normal;color:#1b1b2b;letter-spacing:0.564px;">100</div>
<div class="t" style="left:811.90px;top:339.50px;font-size:14px;line-height:14px;font-weight:normal;color:#1b1b2b;letter-spacing:0.395px;">x100μs</div>
<div class="t" style="left:420.40px;top:404.00px;font-size:17px;line-height:17px;font-weight:bold;color:#222222;letter-spacing:0.123px;">All usable OD entries</div>
<div class="t" style="left:421.00px;top:598.00px;font-size:17px;line-height:17px;font-weight:bold;color:#222222;letter-spacing:0.088px;">OD entries used in the PDO (allocation table)</div>
<div class="t" style="left:457.70px;top:453.20px;font-size:14px;line-height:14px;font-weight:normal;color:#1b1b2b;letter-spacing:-0.505px;">Use</div>
<div class="t" style="left:583.70px;top:453.20px;font-size:14px;line-height:14px;font-weight:normal;color:#1b1b2b;letter-spacing:0.292px;">OD index</div>
<div class="t" style="left:682.20px;top:453.20px;font-size:14px;line-height:14px;font-weight:normal;color:#1b1b2b;letter-spacing:0.600px;">Name</div>
<div class="t" style="left:1058.00px;top:455.20px;font-size:12px;line-height:12px;font-weight:normal;color:#444444;letter-spacing:0.300px;">...</div>
<div class="t" style="left:584.20px;top:477.20px;font-size:14px;line-height:14px;font-weight:normal;color:#1b1b2b;letter-spacing:0.880px;">1001.00</div>
<div class="t" style="left:683.90px;top:477.20px;font-size:14px;line-height:14px;font-weight:normal;color:#1b1b2b;letter-spacing:0.341px;">Error Register</div>
<div class="t" style="left:1060.00px;top:479.50px;font-size:12px;line-height:12px;font-weight:normal;color:#444444;letter-spacing:0.300px;">...</div>
<div class="t" style="left:585.20px;top:501.20px;font-size:14px;line-height:14px;font-weight:normal;color:#1b1b2b;letter-spacing:0.713px;">2039.01</div>
<div class="t" style="left:683.90px;top:501.20px;font-size:14px;line-height:14px;font-weight:normal;color:#1b1b2b;letter-spacing:0.600px;">I_d</div>
<div class="t" style="left:1060.00px;top:503.50px;font-size:12px;line-height:12px;font-weight:normal;color:#444444;letter-spacing:0.300px;">...</div>
<div class="t" style="left:585.20px;top:525.20px;font-size:14px;line-height:14px;font-weight:normal;color:#1b1b2b;letter-spacing:0.713px;">2039.02</div>
<div class="t" style="left:683.90px;top:525.20px;font-size:14px;line-height:14px;font-weight:normal;color:#1b1b2b;letter-spacing:0.600px;">I_q</div>
<div class="t" style="left:1060.00px;top:527.50px;font-size:12px;line-height:12px;font-weight:normal;color:#444444;letter-spacing:0.300px;">...</div>
<div class="t" style="left:458.60px;top:648.20px;font-size:14px;line-height:14px;font-weight:normal;color:#1b1b2b;letter-spacing:0.263px;">OD index</div>
<div class="t" style="left:558.00px;top:648.20px;font-size:14px;line-height:14px;font-weight:normal;color:#1b1b2b;letter-spacing:0.600px;">Name</div>
<div class="t" style="left:932.30px;top:648.20px;font-size:14px;line-height:14px;font-weight:normal;color:#1b1b2b;letter-spacing:0.408px;">Data type</div>
<div class="t" style="left:483.30px;top:672.00px;font-size:14px;line-height:14px;font-weight:normal;color:#1b1b2b;letter-spacing:0.797px;">6041.00</div>
<div class="t" style="left:559.60px;top:672.00px;font-size:14px;line-height:14px;font-weight:normal;color:#1b1b2b;letter-spacing:0.795px;">Statusword</div>
<div class="t" style="left:933.30px;top:672.00px;font-size:14px;line-height:14px;font-weight:normal;color:#1b1b2b;letter-spacing:0.787px;">Unsigned 16</div>
<div class="t" style="left:483.30px;top:696.00px;font-size:14px;line-height:14px;font-weight:normal;color:#1b1b2b;letter-spacing:0.797px;">6061.00</div>
<div class="t" style="left:558.60px;top:696.00px;font-size:14px;line-height:14px;font-weight:normal;color:#1b1b2b;letter-spacing:0.683px;">Modes of operation display</div>
<div class="t" style="left:933.30px;top:696.00px;font-size:14px;line-height:14px;font-weight:normal;color:#1b1b2b;letter-spacing:0.826px;">Integer 08</div>
</body></html>
